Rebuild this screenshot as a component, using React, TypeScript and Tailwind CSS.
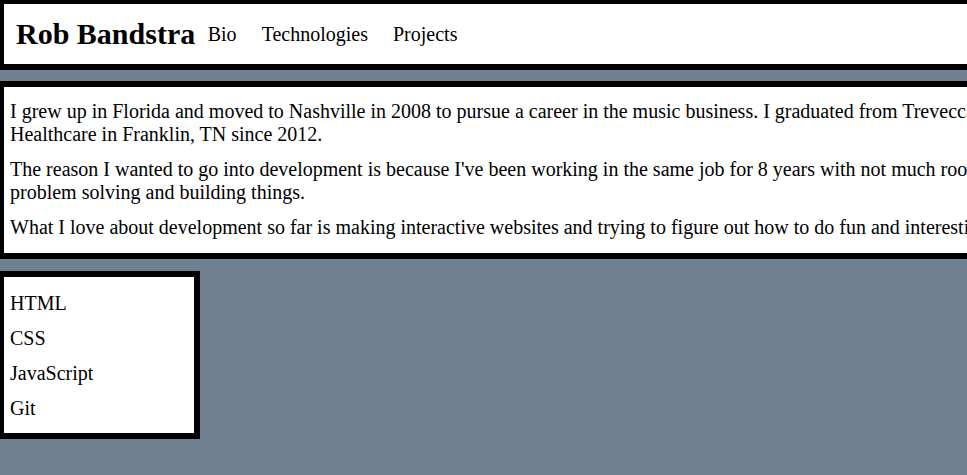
import React from "react";

export default function App() {
  const techs = ["HTML", "CSS", "JavaScript", "Git"];
  return (
    <div
      className="w-[967px] h-[475px] overflow-hidden bg-[#708090] text-black text-[20px] leading-[normal]"
      style={{ fontFamily: '"Liberation Serif", "Times New Roman", serif' }}
    >
      <div className="-mt-[2px] -ml-[2px] w-[1700px] flex flex-col">
        <header className="h-[72px] border-[6px] border-black bg-white flex items-center px-[12px]">
          <h1 className="text-[30px] font-bold leading-[normal]">Rob Bandstra</h1>
          <nav>
            <ul className="flex">
              <li className="px-[12.5px]">Bio</li>
              <li className="px-[12.5px]">Technologies</li>
              <li className="px-[12.5px]">Projects</li>
            </ul>
          </nav>
        </header>

        <section className="mt-[11px] border-[6px] border-black bg-white px-[6px] pt-[13px] pb-[14px] flex flex-col gap-[12px]">
          <p>
            I grew up in Florida and moved to Nashville in 2008 to pursue a career in the music business. I graduated from Trevecca Nazarene University and have been working at Change
            <br />
            Healthcare in Franklin, TN since 2012.
          </p>
          <p>
            The reason I wanted to go into development is because I've been working in the same job for 8 years with not much room to grow, and I have always enjoyed
            <br />
            problem solving and building things.
          </p>
          <p>
            What I love about development so far is making interactive websites and trying to figure out how to do fun and interesting things with code.
          </p>
        </section>

        <section className="mt-[12px] w-[202px] border-[6px] border-black bg-white px-[6px] pt-[15px] pb-[13px]">
          <ul className="flex flex-col gap-[12px]">
            {techs.map((t) => (
              <li key={t}>{t}</li>
            ))}
          </ul>
        </section>
      </div>
    </div>
  );
}
